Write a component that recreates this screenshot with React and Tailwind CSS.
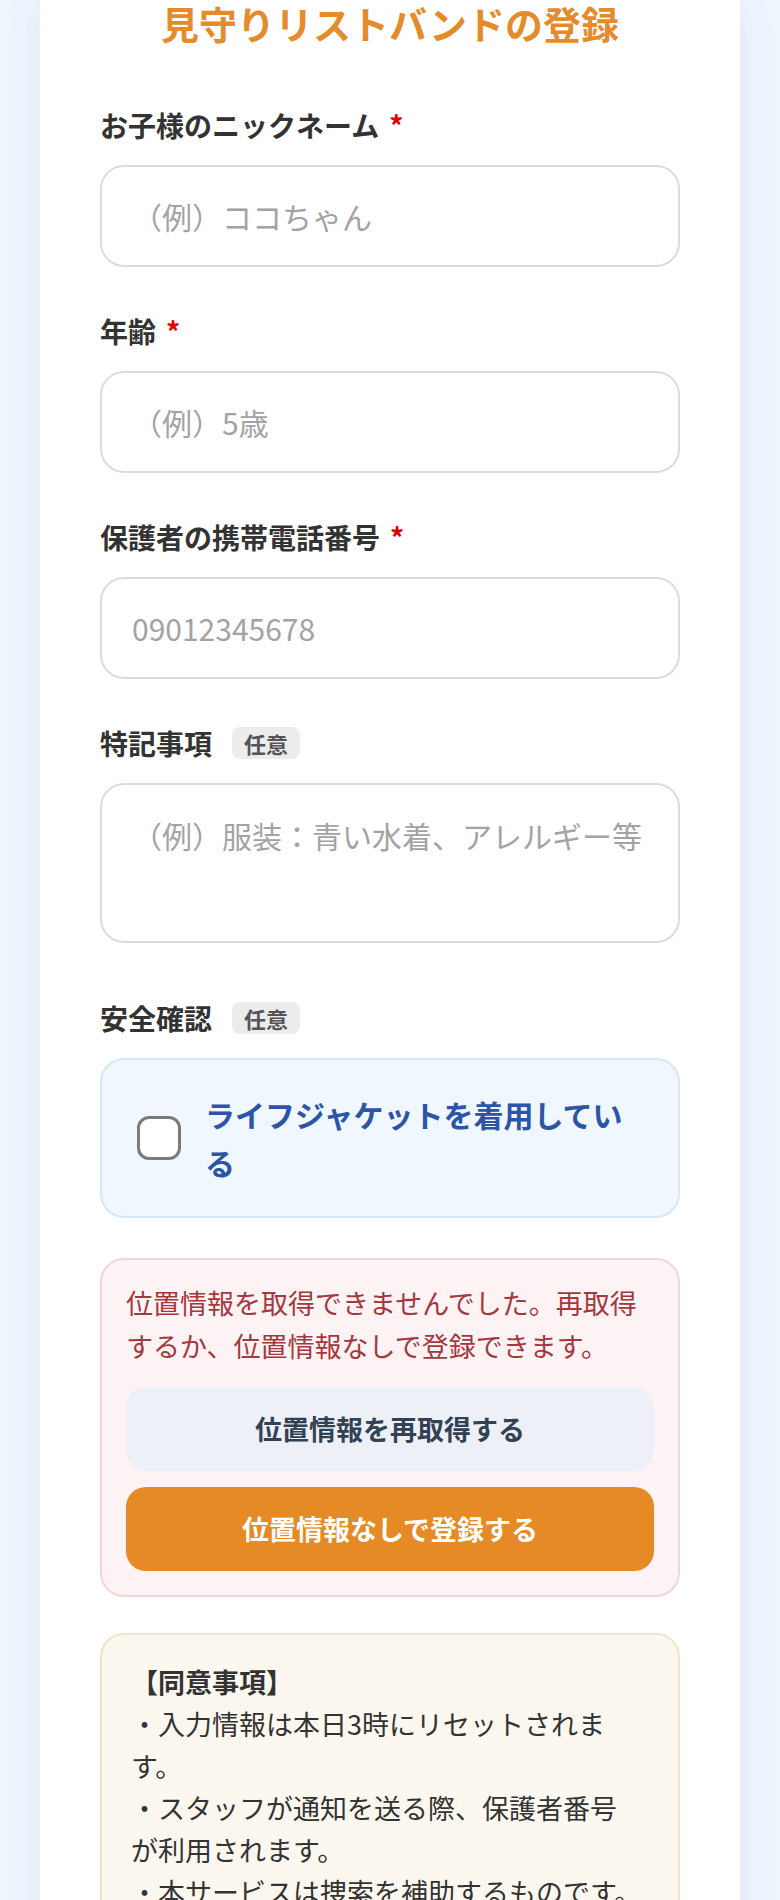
import { useState } from 'react';

function FieldLabel({ children, required, optional }) {
  return (
    <div className="mb-[20px] flex h-[40px] items-center text-[28px] font-bold leading-[40px] text-[#333]">
      <span>{children}</span>
      {required && <span className="ml-[10px] self-start text-[#e00000]">*</span>}
      {optional && (
        <span className="ml-[20px] rounded-[8px] bg-[#ececec] px-[12px] text-[22px] leading-[32px] text-[#555]">
          任意
        </span>
      )}
    </div>
  );
}

function TextField({ placeholder, type = 'text' }) {
  return (
    <input
      type={type}
      placeholder={placeholder}
      className="block h-[102px] w-full rounded-[24px] border-2 border-[#dcdcdc] bg-white px-[30px] text-[30px] text-[#333] outline-none placeholder:text-[#a3a3a3]"
    />
  );
}

export default function App() {
  const [lifeJacket, setLifeJacket] = useState(false);

  return (
    <div className="min-h-[1900px] bg-[#eff5fd] px-[40px] font-['Noto_Sans_CJK_JP','Noto_Sans',sans-serif]">
      <main className="min-h-[1900px] bg-white px-[60px] pb-[60px] shadow-[0_0_36px_rgba(40,90,170,0.08)]">
        <h1 className="text-center text-[38px] font-bold leading-[46px] text-[#e58b2a]">
          見守りリストバンドの登録
        </h1>

        <div className="mt-[59px]">
          <FieldLabel required>お子様のニックネーム</FieldLabel>
          <TextField placeholder="（例）ココちゃん" />
        </div>

        <div className="mt-[44px]">
          <FieldLabel required>年齢</FieldLabel>
          <TextField placeholder="（例）5歳" />
        </div>

        <div className="mt-[44px]">
          <FieldLabel required>保護者の携帯電話番号</FieldLabel>
          <TextField type="tel" placeholder="09012345678" />
        </div>

        <div className="mt-[44px]">
          <FieldLabel optional>特記事項</FieldLabel>
          <textarea
            placeholder="（例）服装：青い水着、アレルギー等"
            className="block h-[160px] w-full resize-none rounded-[24px] border-2 border-[#dcdcdc] bg-white px-[30px] pt-[28px] text-[30px] leading-[45px] text-[#333] outline-none placeholder:text-[#a3a3a3]"
          />
        </div>

        <div className="mt-[55px]">
          <FieldLabel optional>安全確認</FieldLabel>
          <label className="flex h-[160px] items-center gap-[24px] rounded-[24px] border-2 border-[#d6e7f7] bg-[#f0f7fe] pl-[35px] pr-[35px]">
            <input
              type="checkbox"
              checked={lifeJacket}
              onChange={(e) => setLifeJacket(e.target.checked)}
              className="h-[44px] w-[44px] shrink-0 appearance-none rounded-[12px] border-[3px] border-[#7b7b7b] bg-white checked:bg-[#2c55a8]"
            />
            <span className="text-[30px] font-bold leading-[48px] text-[#2c55a8]">
              ライフジャケットを着用している
            </span>
          </label>
        </div>

        <section className="mt-[40px] rounded-[24px] border-2 border-[#f4d4d9] bg-[#fdf3f5] px-[24px] pb-[24px] pt-[21px]">
          <p className="text-[27px] leading-[43px] text-[#a5373d]">
            位置情報を取得できませんでした。再取得するか、位置情報なしで登録できます。
          </p>
          <button className="mt-[20px] flex h-[84px] w-full items-center justify-center rounded-[20px] bg-[#edf1f7] text-[27px] font-bold text-[#334155]">
            位置情報を再取得する
          </button>
          <button className="mt-[16px] flex h-[84px] w-full items-center justify-center rounded-[20px] bg-[#e58a24] text-[27px] font-bold text-white">
            位置情報なしで登録する
          </button>
        </section>

        <section className="mt-[36px] rounded-[24px] border-2 border-[#f3e3c8] bg-[#fdf8ef] pb-[30px] pl-[29px] pr-[46px] pt-[26px] text-[27px] leading-[42px] text-[#333]">
          <p className="font-bold">【同意事項】</p>
          <p>・入力情報は本日3時にリセットされます。</p>
          <p>・スタッフが通知を送る際、保護者番号が利用されます。</p>
          <p className="whitespace-nowrap">・本サービスは捜索を補助するものです。</p>
        </section>
      </main>
    </div>
  );
}
